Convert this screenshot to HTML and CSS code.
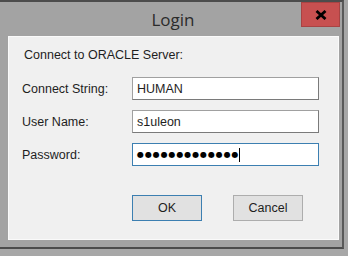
FILE: index.html
```html
<!DOCTYPE html>
<html lang="en">
<head>
    <meta charset="UTF-8">
    <title>Login</title>
    <link rel="stylesheet" href="styles.css">
</head>
<body>
    <div class="window">
        <!-- Title bar -->
        <div class="titlebar">
            <span class="title">Login</span>
            <div class="close-btn">
                <svg width="12" height="10" viewBox="0 0 12 10">
                    <path d="M1.5 1 L10.5 9 M10.5 1 L1.5 9" stroke="#000" stroke-width="2.8" fill="none"/>
                </svg>
            </div>
        </div>

        <!-- Dialog body -->
        <div class="panel">
            <p class="intro">Connect to ORACLE Server:</p>
            <div class="form-row">
                <span class="label">Connect String:</span>
                <div class="field">HUMAN</div>
            </div>
            <div class="form-row">
                <span class="label">User Name:</span>
                <div class="field">s1uleon</div>
            </div>
            <div class="form-row">
                <span class="label">Password:</span>
                <div class="field field-focus"><span class="dots">●●●●●●●●●●●●●</span><span class="caret"></span></div>
            </div>
            <div class="buttons">
                <div class="button button-default">OK</div>
                <div class="button">Cancel</div>
            </div>
        </div>
    </div>
</body>
</html>
```

FILE: styles.css
```css
/* Global Styles */
body {
    margin: 0;
    background-color: #a7a7a7;
    font-family: 'Liberation Sans', Arial, sans-serif;
    font-size: 12.5px;
    color: #1e1e1e;
}

.window {
    width: 342px;
    height: 245px;
    background-color: #a3a3a3;
    border-top: 2px solid #4c4c4c;
    border-right: 2px solid #5a5a5a;
    border-bottom: 2px solid #4c4c4c;
}

/* Title bar */
.titlebar {
    height: 34px;
    display: flex;
    justify-content: center;
    position: relative;
}

.title {
    font-family: 'Open Sans', sans-serif;
    font-size: 17px;
    color: #2b2b2b;
    padding-top: 6px;
    padding-left: 4px;
}

.close-btn {
    position: absolute;
    top: 0;
    right: 2px;
    width: 37px;
    height: 23px;
    background-color: #c75050;
    border: 1px solid #a84343;
    display: flex;
    align-items: center;
    justify-content: center;
}

/* Panel */
.panel {
    margin-left: 8px;
    width: 329px;
    height: 202px;
    background-color: #f0f0f0;
    border: 1px solid #fafafa;
}

.intro {
    margin: 0;
    padding: 10px 0 0 15px;
    line-height: 16px;
    height: 30px;
}

.form-row {
    display: flex;
    align-items: center;
    height: 23px;
    margin-bottom: 10px;
}

.label {
    width: 110px;
    padding-left: 13px;
}

.field {
    width: 181px;
    height: 21px;
    padding-left: 4px;
    background-color: #ffffff;
    border: 1px solid #7a7a7a;
    border-top-color: #a0a0a0;
    border-left-color: #a0a0a0;
    display: flex;
    align-items: center;
    font-size: 12.5px;
}

.field-focus {
    border-color: #3c7fb1;
}

.dots {
    font-family: 'DejaVu Sans', sans-serif;
    font-size: 8px;
    letter-spacing: 0.9px;
    color: #000;
}

.caret {
    display: inline-block;
    width: 1px;
    height: 14px;
    background-color: #000;
}

/* Buttons */
.buttons {
    display: flex;
    gap: 31px;
    padding-left: 123px;
    margin-top: 29px;
}

.button {
    width: 68px;
    height: 24px;
    background-color: #e1e1e1;
    border: 1px solid #adadad;
    display: flex;
    align-items: center;
    justify-content: center;
}

.button-default {
    border-color: #3c7fb1;
}
```
